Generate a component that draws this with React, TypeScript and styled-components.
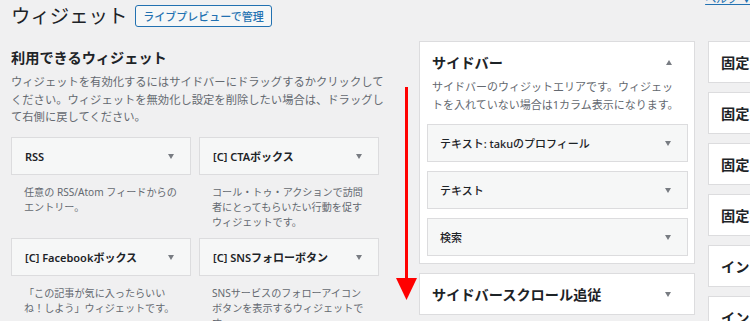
import React from "react";
import styled, { createGlobalStyle } from "styled-components";

const GlobalStyle = createGlobalStyle`
  html, body { margin: 0; padding: 0; }
  body {
    background: #f0f0f1;
    font-family: "Noto Sans", "Noto Sans CJK JP", sans-serif;
    color: #1d2327;
    overflow: hidden;
  }
`;

const Page = styled.div`
  position: relative;
  width: 750px;
  height: 321px;
  overflow: hidden;
  padding-left: 11px;
  box-sizing: border-box;
`;

const Header = styled.div`
  display: flex;
  align-items: center;
  height: 30px;
  margin-top: 1px;
  gap: 8px;
`;

const Title = styled.h1`
  margin: 0;
  font-size: 19.4px;
  font-weight: 400;
  line-height: 30px;
  color: #1d2327;
`;

const PreviewButton = styled.a`
  display: inline-flex;
  align-items: center;
  height: 22px;
  box-sizing: border-box;
  padding: 0 7px;
  border: 1px solid #2271b1;
  border-radius: 3px;
  background: #f6f7f7;
  color: #2271b1;
  font-size: 11px;
  font-weight: 500;
  white-space: nowrap;
`;

const HelpLink = styled.a`
  margin-left: auto;
  margin-right: -2px;
  align-self: flex-start;
  margin-top: -9px;
  font-size: 11px;
  line-height: 14px;
  color: #2271b1;
  text-decoration: underline;
  white-space: nowrap;
`;

const Columns = styled.div`
  display: flex;
  align-items: flex-start;
  margin-top: 10px;
`;

const LeftColumn = styled.section`
  width: 369px;
  flex: none;
  padding-top: 7px;
`;

const SectionHeading = styled.h2`
  margin: 0;
  font-size: 14.2px;
  font-weight: 700;
  line-height: 20px;
`;

const Description = styled.p<{ $size?: number }>`
  margin: 5px 0 0;
  font-size: ${(p) => p.$size ?? 11.3}px;
  line-height: 17.5px;
  color: #646970;
  white-space: nowrap;
`;

const WidgetGrid = styled.div`
  display: grid;
  grid-template-columns: 180px 180px;
  column-gap: 8px;
  row-gap: 8.5px;
  margin-top: 11.5px;
`;

const WidgetItem = styled.div``;

const Caret = styled.span<{ $up?: boolean }>`
  flex: none;
  width: 0;
  height: 0;
  border-left: 3px solid transparent;
  border-right: 3px solid transparent;
  ${(p) =>
    p.$up
      ? "border-bottom: 5px solid #787c82;"
      : "border-top: 5px solid #787c82;"}
`;

const WidgetBar = styled.div<{ $compact?: boolean }>`
  display: flex;
  align-items: center;
  justify-content: space-between;
  height: 38px;
  box-sizing: border-box;
  border: 1px solid #dcdcde;
  background: #f6f7f7;
  padding: ${(p) => (p.$compact ? "0 16px 0 12px" : "0 16px 0 13px")};
  font-size: 11px;
  font-weight: 600;
  color: #1d2327;
  white-space: nowrap;
`;

const WidgetDesc = styled.p`
  margin: 9.5px 0 0;
  padding: 0 13px;
  font-size: 10.1px;
  line-height: 15px;
  color: #646970;
  white-space: nowrap;
`;

const MiddleColumn = styled.section`
  width: 276px;
  flex: none;
  margin-left: 39px;
`;

const SidebarPanel = styled.div`
  box-sizing: border-box;
  border: 1px solid #dcdcde;
  background: #fff;
  padding: 10px 6px 7px 7px;
`;

const PanelHeader = styled.div`
  display: flex;
  align-items: center;
  justify-content: space-between;
  height: 20px;
  padding: 0 16px 0 5px;
  font-size: 14.2px;
  font-weight: 700;
`;

const PanelDesc = styled.p`
  margin: 6px 0 0;
  padding: 0 5px;
  font-size: 11px;
  line-height: 17.5px;
  color: #646970;
  white-space: nowrap;
`;

const PanelList = styled.div`
  display: flex;
  flex-direction: column;
  gap: 9px;
  margin-top: 11px;

  ${WidgetBar} {
    font-weight: 500;
  }
`;

const CollapsedPanel = styled.div<{ $narrow?: boolean }>`
  display: flex;
  align-items: center;
  justify-content: space-between;
  height: 42px;
  box-sizing: border-box;
  border: 1px solid #dcdcde;
  background: #fff;
  padding: ${(p) => (p.$narrow ? "0 0 0 12px" : "0 23px 0 12px")};
  font-size: 14.2px;
  font-weight: 700;
  white-space: nowrap;
  overflow: hidden;
`;

const MiddleStack = styled.div`
  display: flex;
  flex-direction: column;
  gap: 9px;
`;

const RightColumn = styled.section`
  width: 160px;
  flex: none;
  margin-left: 13px;
  display: flex;
  flex-direction: column;
  gap: 9px;
`;

const Annotation = styled.svg`
  position: absolute;
  left: 395px;
  top: 85px;
  pointer-events: none;
`;

const available = [
  {
    title: "RSS",
    desc: ["任意の RSS/Atom フィードからの", "エントリー。"],
  },
  {
    title: "[C] CTAボックス",
    desc: ["コール・トゥ・アクションで訪問", "者にとってもらいたい行動を促す", "ウィジェットです。"],
  },
  {
    title: "[C] Facebookボックス",
    desc: ["「この記事が気に入ったらいい", "ね！しよう」ウィジェットです。"],
  },
  {
    title: "[C] SNSフォローボタン",
    desc: ["SNSサービスのフォローアイコン", "ボタンを表示するウィジェットで", "す。"],
  },
];

const sidebarWidgets = ["テキスト: takuのプロフィール", "テキスト", "検索"];

const otherAreas = [
  "固定ページ本文上",
  "固定ページ本文中",
  "固定ページ本文下",
  "固定ページSNSボタン上",
  "インデックスリスト トップ",
  "インデックスリスト ミドル",
];

export default function App() {
  return (
    <>
      <GlobalStyle />
      <Page>
        <Header>
          <Title>ウィジェット</Title>
          <PreviewButton>ライブプレビューで管理</PreviewButton>
          <HelpLink>ヘルプ ▼</HelpLink>
        </Header>
        <Columns>
          <LeftColumn>
            <SectionHeading>利用できるウィジェット</SectionHeading>
            <Description>
              ウィジェットを有効化するにはサイドバーにドラッグするかクリックして
              <br />
              ください。ウィジェットを無効化し設定を削除したい場合は、ドラッグし
              <br />
              て右側に戻してください。
            </Description>
            <WidgetGrid>
              {available.map((w) => (
                <WidgetItem key={w.title}>
                  <WidgetBar>
                    <span>{w.title}</span>
                    <Caret />
                  </WidgetBar>
                  <WidgetDesc>
                    {w.desc.map((line, i) => (
                      <React.Fragment key={i}>
                        {i > 0 && <br />}
                        {line}
                      </React.Fragment>
                    ))}
                  </WidgetDesc>
                </WidgetItem>
              ))}
            </WidgetGrid>
          </LeftColumn>
          <MiddleColumn>
            <MiddleStack>
              <SidebarPanel>
                <PanelHeader>
                  <span>サイドバー</span>
                  <Caret $up />
                </PanelHeader>
                <PanelDesc>
                  サイドバーのウィジットエリアです。ウィジェッ
                  <br />
                  トを入れていない場合は1カラム表示になります。
                </PanelDesc>
                <PanelList>
                  {sidebarWidgets.map((t) => (
                    <WidgetBar key={t} $compact>
                      <span>{t}</span>
                      <Caret />
                    </WidgetBar>
                  ))}
                </PanelList>
              </SidebarPanel>
              <CollapsedPanel>
                <span>サイドバースクロール追従</span>
                <Caret />
              </CollapsedPanel>
            </MiddleStack>
          </MiddleColumn>
          <RightColumn>
            {otherAreas.map((a) => (
              <CollapsedPanel key={a} $narrow>
                <span>{a}</span>
              </CollapsedPanel>
            ))}
          </RightColumn>
        </Columns>
        <Annotation width="24" height="218" viewBox="0 0 24 218">
          <line x1="11.5" y1="2" x2="11.5" y2="196" stroke="#ff0000" strokeWidth="3" />
          <polygon points="1,193 22,193 11.5,215" fill="#ff0000" />
        </Annotation>
      </Page>
    </>
  );
}
